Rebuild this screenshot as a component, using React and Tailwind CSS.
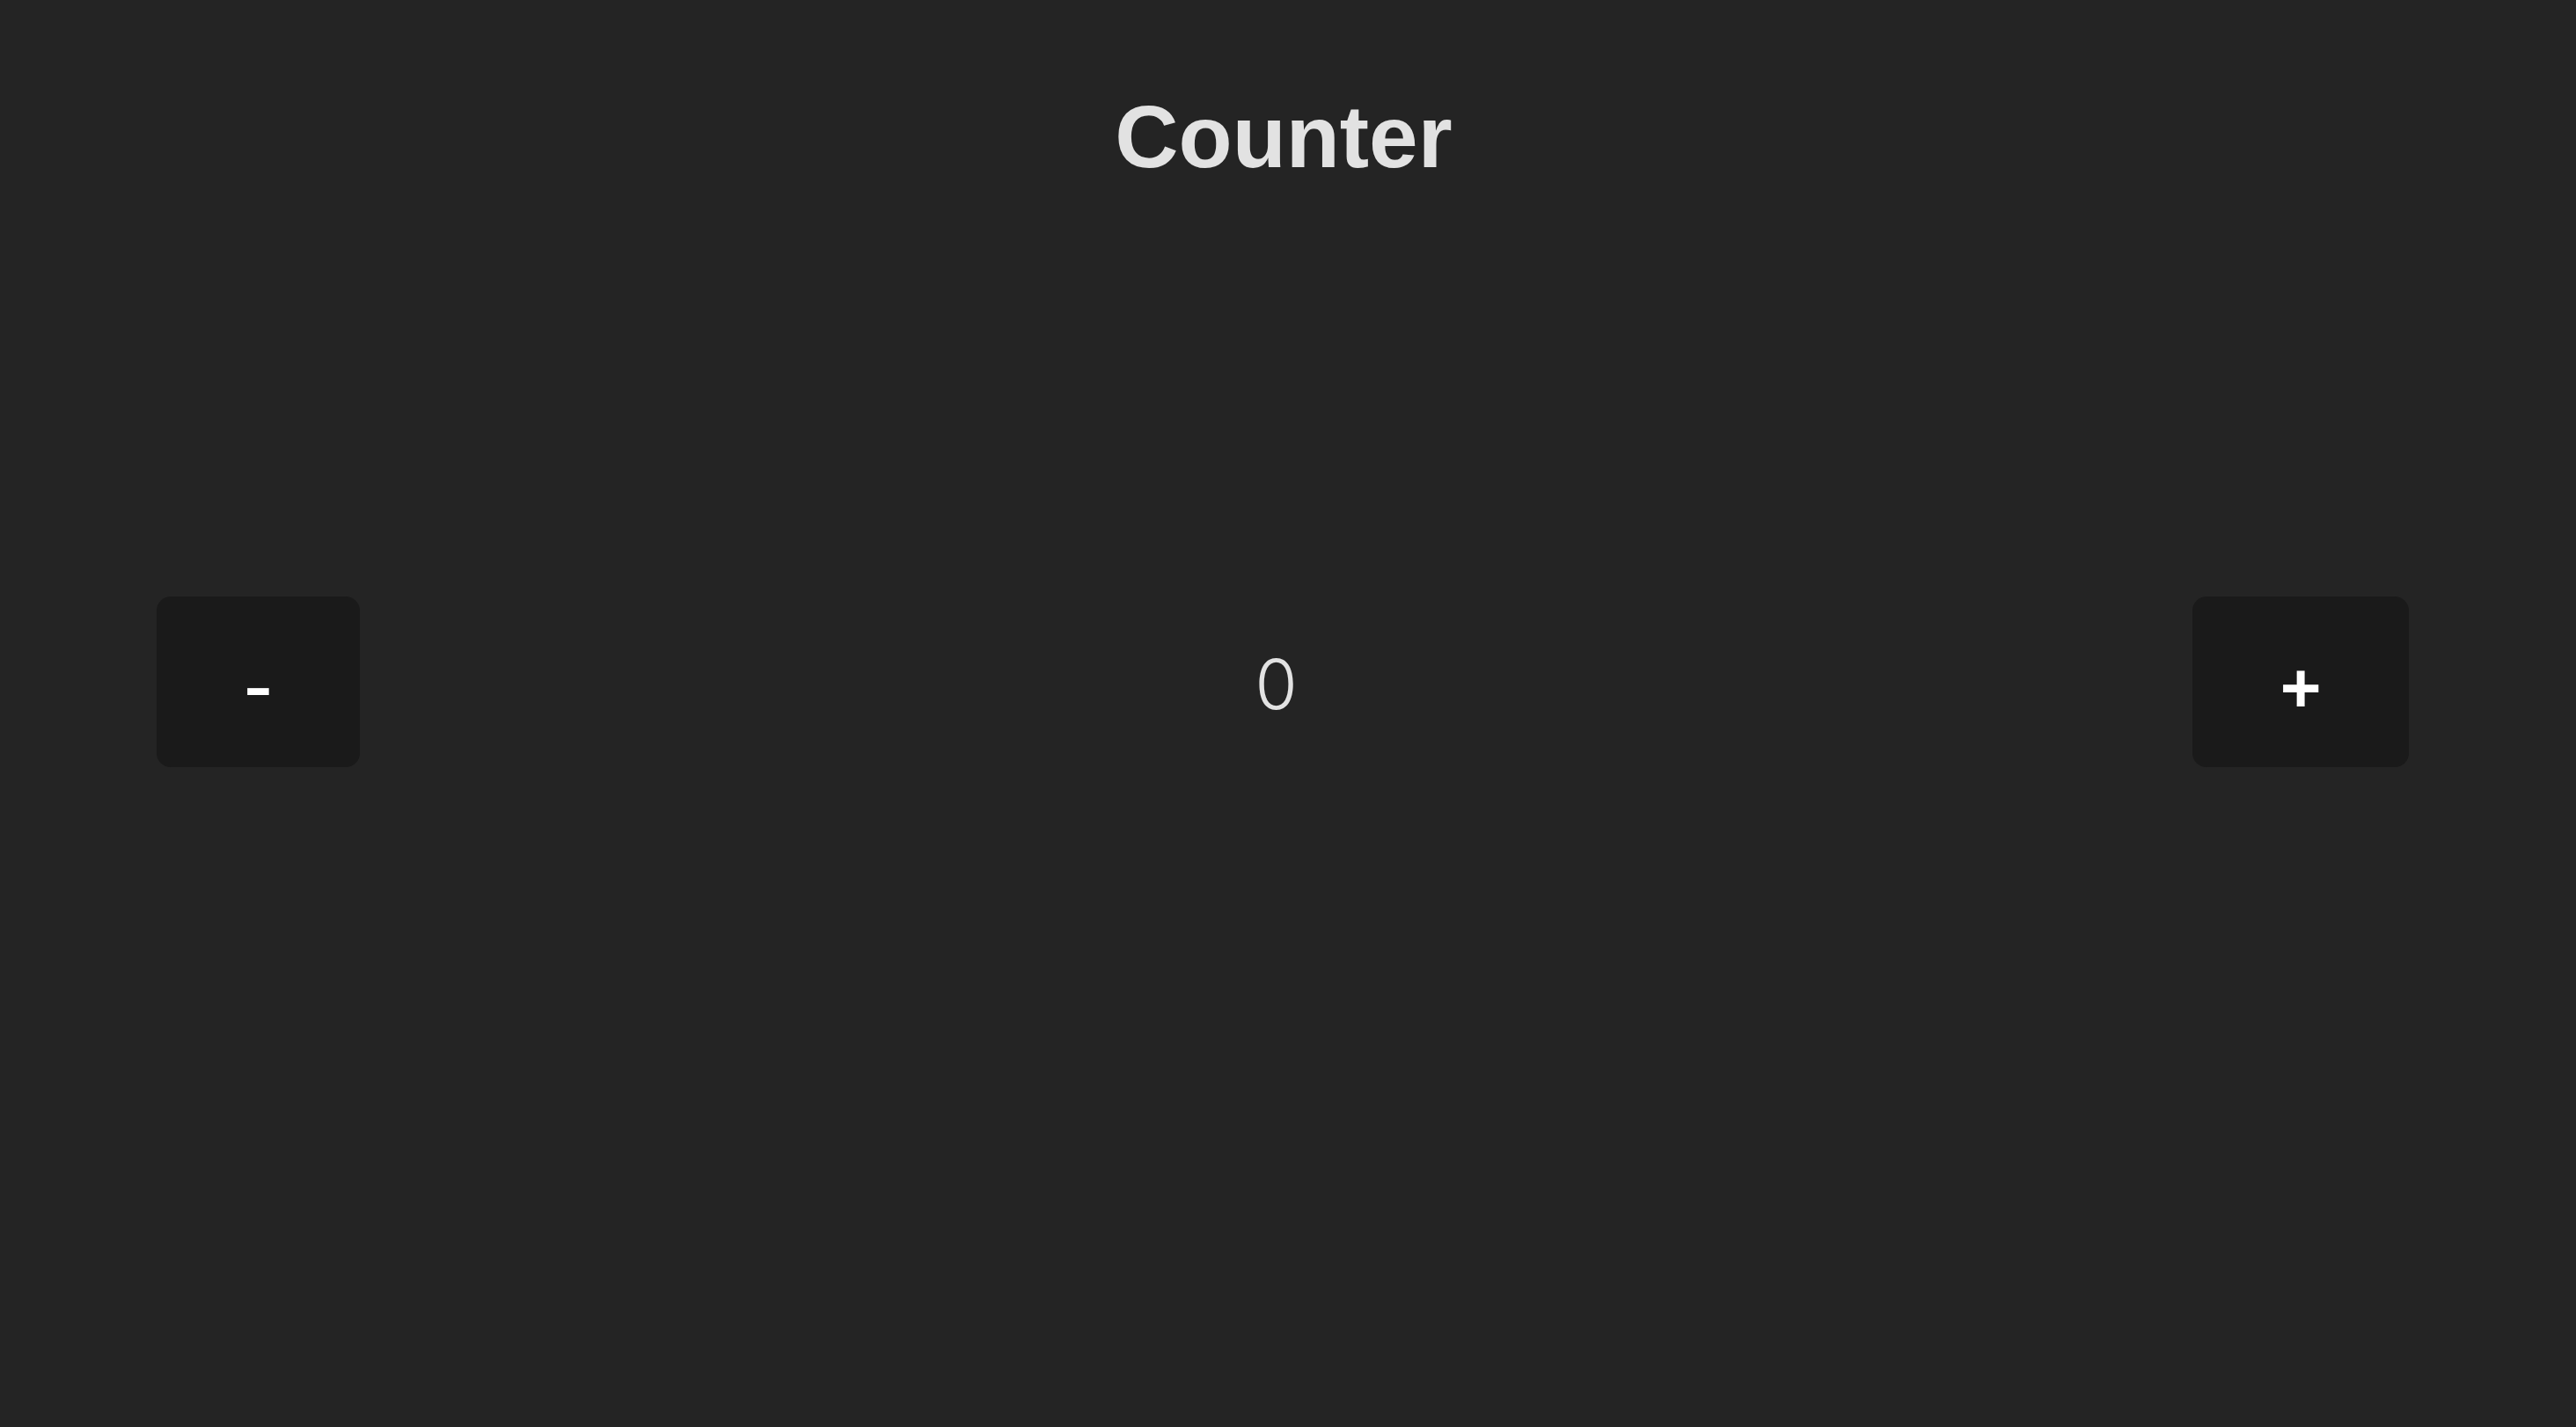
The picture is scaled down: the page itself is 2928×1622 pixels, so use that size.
export default function App() {
  return (
    <div className="min-h-screen w-full bg-[#242424] flex flex-col" style={{ fontFamily: '"Liberation Sans", Arial, sans-serif' }}>
      <h1 className="pt-[100px] text-center text-[100px] leading-[110px] font-bold text-[#e2e2e2] pr-[10px]">Counter</h1>
      <div className="mt-[468px] flex items-center justify-between pl-[178px] pr-[190px]">
        <button className="w-[231px] h-[194px] rounded-[16px] bg-[#1a1a1a] text-white flex items-center justify-center text-[100px] leading-none">
          <span className="relative top-[3px]">-</span>
        </button>
        <div className="relative top-[3px] text-[78px] leading-none text-[#e2e2e2] font-light" style={{ fontFamily: 'Inter, sans-serif' }}>0</div>
        <button className="w-[246px] h-[194px] rounded-[16px] bg-[#1a1a1a] text-white flex items-center justify-center text-[80px] leading-none font-bold">
          <span className="relative top-[7px]">+</span>
        </button>
      </div>
    </div>
  );
}
